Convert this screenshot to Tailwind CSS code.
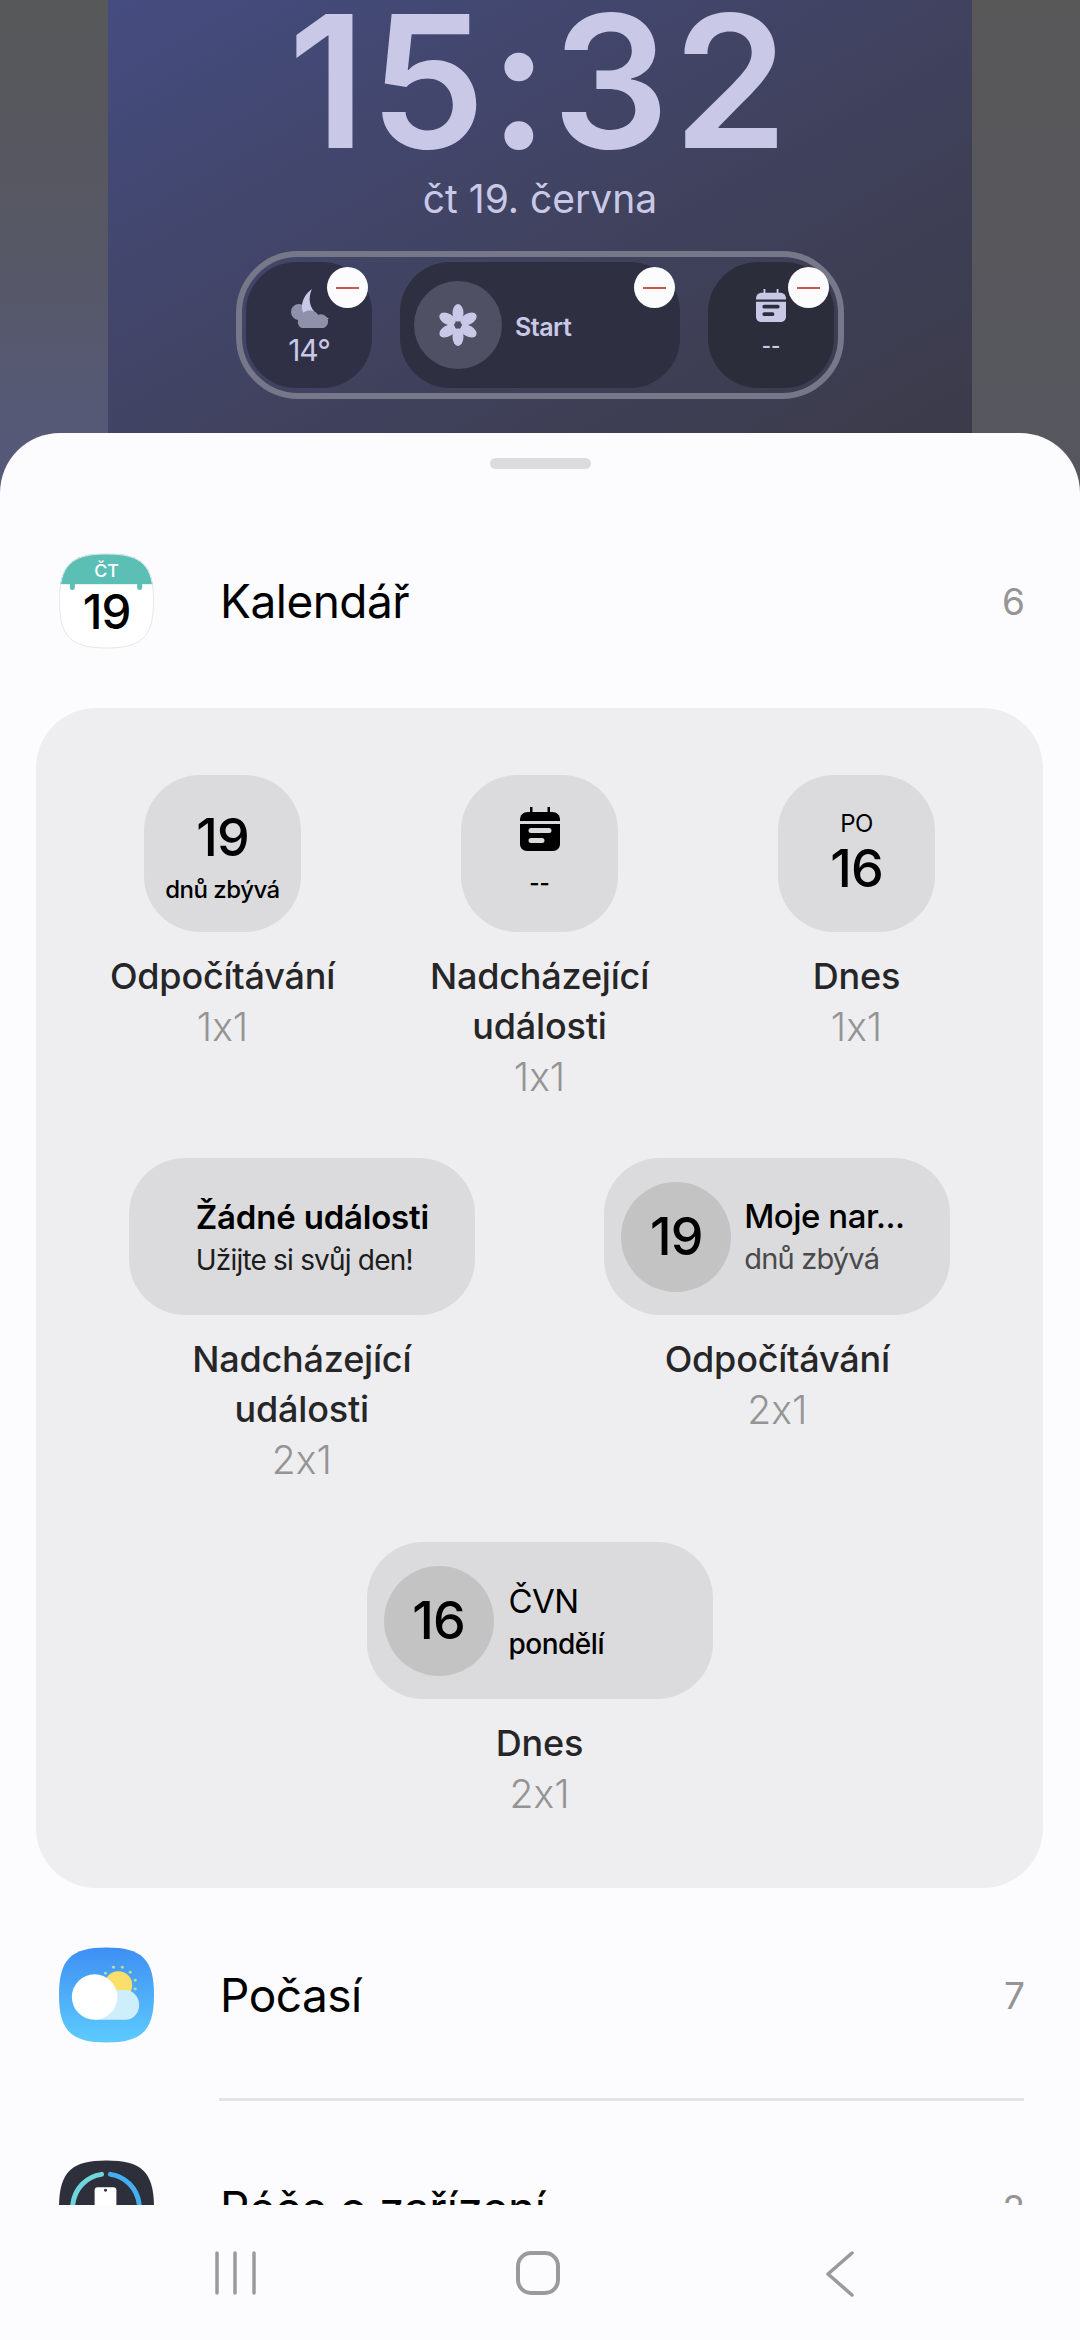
<!DOCTYPE html>
<html lang="cs">
<head>
    <meta charset="UTF-8">
    <meta name="viewport" content="width=device-width, initial-scale=1.0">
    <title>Kalendář - widgety</title>
    <script src="https://cdn.jsdelivr.net/npm/@tailwindcss/browser@4"></script>
</head>
<body class="w-[1080px] h-[2340px] overflow-hidden bg-[#fcfcff] font-['Inter','Noto_Sans',sans-serif] [font-feature-settings:'calt'_0]">

    <!-- lock screen preview -->
    <div class="flex h-[493px] -mb-[60px]">
        <div class="w-[108px] bg-gradient-to-b from-[#575858] via-[#565865] to-[#55597c]"></div>
        <div class="w-[864px] flex flex-col items-center bg-gradient-to-br from-[#454c80] via-[#40425f] to-[#3a3a46] text-[#c9c9e7]">
            <div class="h-[162px] text-[184px] leading-[162px] font-semibold tracking-[4px]">15:32</div>
            <div class="mt-[13px] h-[48px] text-[39px] leading-[48px]">čt 19. června</div>
            <div class="mt-[28px] w-[608px] h-[148px] border-[6px] border-[#767789] rounded-[62px] flex items-center justify-between px-[4px]">
                <div class="relative w-[126px] h-[126px] rounded-[50px] bg-[#2f3045] flex flex-col items-center">
                    <svg class="mt-[26px] ml-[4px]" width="42" height="42" viewBox="0 0 42 42">
                        <circle cx="9" cy="24" r="8" fill="#8f90aa"/>
                        <path d="M22 1C12 8 9 20 15 28C20 35 31 36 39 30C30 30 22 24 20 15C19 10 20 5 22 1Z" fill="#c9c9e7"/>
                        <path d="M12 40a6 6 0 0 1 -1 -11a9 8 0 0 1 17 -2a7 7 0 0 1 6 13Z" fill="#8f90aa"/>
                    </svg>
                    <div class="mt-[3px] text-[30px] leading-[34px] tracking-[-1px]">14°</div>
                    <div class="absolute top-[5px] right-[4px] w-[41px] h-[41px] rounded-full bg-[#fcfcff] flex items-center justify-center"><div class="w-[23px] h-[2px] bg-[#c8584c]"></div></div>
                </div>
                <div class="relative w-[280px] h-[126px] rounded-[50px] bg-[#2f2f42] flex items-center pl-[14px]">
                    <div class="w-[88px] h-[88px] rounded-full bg-[#4f5063] flex items-center justify-center">
                        <svg width="42" height="42" viewBox="0 0 42 42" fill="#c9c9e7">
                            <ellipse cx="21" cy="9" rx="5.500" ry="9"/>
                            <ellipse cx="21" cy="9" rx="5.500" ry="9" transform="rotate(60 21 21)"/>
                            <ellipse cx="21" cy="9" rx="5.500" ry="9" transform="rotate(120 21 21)"/>
                            <ellipse cx="21" cy="9" rx="5.500" ry="9" transform="rotate(180 21 21)"/>
                            <ellipse cx="21" cy="9" rx="5.500" ry="9" transform="rotate(240 21 21)"/>
                            <ellipse cx="21" cy="9" rx="5.500" ry="9" transform="rotate(300 21 21)"/>
                            <circle cx="21" cy="21" r="3.500" fill="#4f5063"/>
                        </svg>
                    </div>
                    <div class="ml-[13px] pt-[3px] text-[25px] leading-[30px] font-semibold tracking-[-0.5px]">Start</div>
                    <div class="absolute top-[5px] right-[5px] w-[41px] h-[41px] rounded-full bg-[#fcfcff] flex items-center justify-center"><div class="w-[23px] h-[2px] bg-[#c8584c]"></div></div>
                </div>
                <div class="relative w-[126px] h-[126px] rounded-[50px] bg-[#2c2d3a] flex flex-col items-center">
                    <svg class="mt-[27px]" width="30" height="33" viewBox="0 0 40 44" fill="currentColor">
                        <path d="M10 0h2.500v6h-2.500zM27.500 0h2.500v6h-2.500z"/>
                        <path d="M0 13C0 8 3 5 8 5h24c5 0 8 3 8 8v1H0z"/>
                        <path fill-rule="evenodd" d="M0 17h40v20c0 4 -3 7 -7 7H7c-4 0 -7 -3 -7 -7zM11 21a2.500 2.500 0 0 0 0 5h18a2.500 2.500 0 0 0 0 -5zM11 31a2.500 2.500 0 0 0 0 5h11a2.500 2.500 0 0 0 0 -5z"/>
                    </svg>
                    <div class="mt-[12px] text-[20px] leading-[24px] font-semibold">--</div>
                    <div class="absolute top-[5px] right-[5px] w-[41px] h-[41px] rounded-full bg-[#fcfcff] flex items-center justify-center"><div class="w-[23px] h-[2px] bg-[#c8584c]"></div></div>
                </div>
            </div>
        </div>
        <div class="w-[108px] bg-gradient-to-b from-[#585859] to-[#56565f]"></div>
    </div>

    <!-- bottom sheet -->
    <div class="relative h-[1772px] rounded-t-[60px] bg-[#fcfcff] overflow-hidden">
        <div class="pt-[25px] flex justify-center">
            <div class="w-[101px] h-[11px] rounded-full bg-[#dcdce0]"></div>
        </div>

        <div class="mt-[84px] flex items-center h-[96px] pl-[59px] pr-[55px]">
            <svg width="95" height="96" viewBox="0 0 96 96">
                <defs><clipPath id="sq1"><path d="M48 0C84 0 96 12 96 48C96 84 84 96 48 96C12 96 0 84 0 48C0 12 12 0 48 0Z"/></clipPath></defs>
                <g clip-path="url(#sq1)">
                    <rect width="96" height="96" fill="#fff"/>
                    <rect width="96" height="31" fill="#5cbfb6"/>
                    <rect x="11" y="28" width="5" height="9" rx="2.500" fill="#5cbfb6"/>
                    <rect x="79" y="28" width="5" height="9" rx="2.500" fill="#5cbfb6"/>
                    <text x="48" y="24" text-anchor="middle" font-family="Inter" font-size="18" font-weight="500" fill="#fff">ČT</text>
                    <text x="48" y="76" text-anchor="middle" font-family="Inter" font-size="48" font-weight="500" letter-spacing="-1" fill="#000">19</text>
                </g>
                <path d="M48 .5C84 .5 95.500 12 95.500 48C95.500 84 84 95.500 48 95.500C12 95.500 .5 84 .5 48C.5 12 12 .5 48 .5Z" fill="none" stroke="#e6e6e8"/>
            </svg>
            <div class="ml-[66px] text-[46px] leading-[56px] text-black tracking-[-0.5px]">Kalendář</div>
            <div class="ml-auto pt-[2px] text-[37px] leading-[44px] text-[#959595]">6</div>
        </div>

        <div class="mt-[59px] ml-[36px] w-[1007px] h-[1180px] rounded-[60px] bg-[#eeeef0] px-[28px] pt-[67px] text-center">
            <div class="grid grid-cols-3">
                <div class="flex flex-col items-center">
                    <div class="w-[157px] h-[157px] rounded-[56px] bg-[#dbdbdd] flex flex-col items-center text-black">
                        <div class="mt-[31px] text-[52px] leading-[64px] font-medium tracking-[-1px]">19</div>
                        <div class="mt-[5px] text-[24px] leading-[30px] font-medium tracking-[-0.5px]">dnů zbývá</div>
                    </div>
                    <div class="mt-[19px] w-[280px] text-[36px] leading-[50px] font-medium tracking-[-0.2px] text-[#262628]">Odpočítávání</div>
                    <div class="mt-[1px] text-[39px] leading-[50px] font-light text-[#949494]">1x1</div>
                </div>
                <div class="flex flex-col items-center">
                    <div class="w-[157px] h-[157px] rounded-[56px] bg-[#dbdbdd] flex flex-col items-center text-black">
                        <svg class="mt-[32px]" width="40" height="44" viewBox="0 0 40 44" fill="currentColor">
                            <path d="M10 0h2.500v6h-2.500zM27.500 0h2.500v6h-2.500z"/>
                            <path d="M0 13C0 8 3 5 8 5h24c5 0 8 3 8 8v1H0z"/>
                            <path fill-rule="evenodd" d="M0 17h40v20c0 4 -3 7 -7 7H7c-4 0 -7 -3 -7 -7zM11 21a2.500 2.500 0 0 0 0 5h18a2.500 2.500 0 0 0 0 -5zM11 31a2.500 2.500 0 0 0 0 5h11a2.500 2.500 0 0 0 0 -5z"/>
                        </svg>
                        <div class="mt-[17px] text-[22px] leading-[30px] font-semibold">--</div>
                    </div>
                    <div class="mt-[19px] w-[280px] text-[36px] leading-[50px] font-medium tracking-[-0.2px] text-[#262628]">Nadcházející události</div>
                    <div class="mt-[1px] text-[39px] leading-[50px] font-light text-[#949494]">1x1</div>
                </div>
                <div class="flex flex-col items-center">
                    <div class="w-[157px] h-[157px] rounded-[56px] bg-[#dbdbdd] flex flex-col items-center text-black">
                        <div class="mt-[34px] text-[24px] leading-[30px] tracking-[-0.5px]">PO</div>
                        <div class="-mt-[2px] text-[52px] leading-[64px] font-medium tracking-[-1px]">16</div>
                    </div>
                    <div class="mt-[19px] w-[280px] text-[36px] leading-[50px] font-medium tracking-[-0.2px] text-[#262628]">Dnes</div>
                    <div class="mt-[1px] text-[39px] leading-[50px] font-light text-[#949494]">1x1</div>
                </div>
            </div>

            <div class="mt-[56px] grid grid-cols-2">
                <div class="flex flex-col items-center">
                    <div class="w-[346px] h-[157px] rounded-[56px] bg-[#dbdbdd] flex flex-col justify-center items-start pl-[67px] pt-[3px] text-left text-black">
                        <div class="text-[33px] leading-[44px] font-semibold tracking-[-0.2px]">Žádné události</div>
                        <div class="text-[28px] leading-[42px] tracking-[-0.8px] text-[#1c1c1c]">Užijte si svůj den!</div>
                    </div>
                    <div class="mt-[19px] w-[280px] text-[36px] leading-[50px] font-medium tracking-[-0.2px] text-[#262628]">Nadcházející události</div>
                    <div class="mt-[1px] text-[39px] leading-[50px] font-light text-[#949494]">2x1</div>
                </div>
                <div class="flex flex-col items-center">
                    <div class="w-[346px] h-[157px] rounded-[56px] bg-[#dbdbdd] flex items-center pl-[17px] text-left">
                        <div class="w-[110px] h-[110px] rounded-full bg-[#c3c3c3] flex items-center justify-center text-[52px] font-medium tracking-[-1px] text-black">19</div>
                        <div class="ml-[13px] pt-[1px]">
                            <div class="text-[33px] leading-[44px] font-medium tracking-[-0.5px] text-black">Moje nar...</div>
                            <div class="text-[29px] leading-[42px] tracking-[-0.8px] text-[#4a4a4a]">dnů zbývá</div>
                        </div>
                    </div>
                    <div class="mt-[19px] w-[280px] text-[36px] leading-[50px] font-medium tracking-[-0.2px] text-[#262628]">Odpočítávání</div>
                    <div class="mt-[1px] text-[39px] leading-[50px] font-light text-[#949494]">2x1</div>
                </div>
            </div>

            <div class="mt-[57px] flex flex-col items-center">
                <div class="w-[346px] h-[157px] rounded-[56px] bg-[#dbdbdd] flex items-center pl-[17px] text-left text-black">
                    <div class="w-[110px] h-[110px] rounded-full bg-[#c3c3c3] flex items-center justify-center text-[52px] font-medium tracking-[-1px]">16</div>
                    <div class="ml-[15px] pt-[3px]">
                        <div class="text-[33px] leading-[44px] tracking-[-0.5px]">ČVN</div>
                        <div class="text-[28px] leading-[42px] font-medium tracking-[-0.5px]">pondělí</div>
                    </div>
                </div>
                <div class="mt-[19px] w-[280px] text-[36px] leading-[50px] font-medium tracking-[-0.2px] text-[#262628]">Dnes</div>
                <div class="mt-[1px] text-[39px] leading-[50px] font-light text-[#949494]">2x1</div>
            </div>
        </div>

        <div class="mt-[59px] flex items-center h-[96px] pl-[59px] pr-[55px]">
            <svg width="95" height="96" viewBox="0 0 96 96">
                <defs>
                    <linearGradient id="sky" x1="0" y1="0" x2="0" y2="1"><stop offset="0" stop-color="#3e8ff3"/><stop offset="1" stop-color="#5dcbfe"/></linearGradient>
                </defs>
                <path d="M48 0C84 0 96 12 96 48C96 84 84 96 48 96C12 96 0 84 0 48C0 12 12 0 48 0Z" fill="url(#sky)"/>
                <circle cx="60" cy="38" r="14" fill="#fbdf6b"/>
                <g fill="#b9dc9a"><circle cx="47" cy="26" r="1.500"/><circle cx="55" cy="20" r="1.500"/><circle cx="64" cy="20" r="1.500"/><circle cx="72" cy="25" r="1.500"/><circle cx="77" cy="33" r="1.500"/><circle cx="77" cy="42" r="1.500"/></g>
                <path d="M36 73V43H67A14 15 0 0 1 67 73Z" fill="#cfeefc"/>
                <circle cx="36" cy="50" r="23" fill="#fff"/>
            </svg>
            <div class="ml-[66px] text-[46px] leading-[56px] text-black tracking-[-0.5px]">Počasí</div>
            <div class="ml-auto pt-[2px] text-[37px] leading-[44px] text-[#959595]">7</div>
        </div>

        <div class="mt-[55px] ml-[219px] w-[805px] h-[3px] bg-[#e4e4e6]"></div>

        <div class="mt-[59px] flex items-center h-[96px] pl-[59px] pr-[55px]">
            <svg width="95" height="96" viewBox="0 0 96 96">
                <path d="M48 0C84 0 96 12 96 48C96 84 84 96 48 96C12 96 0 84 0 48C0 12 12 0 48 0Z" fill="#2d2f3b"/>
                <path d="M14 44C16 28 28 16 43 14" fill="none" stroke="#6fd6dc" stroke-width="5" stroke-linecap="round"/>
                <path d="M52 14C67 16 79 28 81 44" fill="none" stroke="#45aef0" stroke-width="5" stroke-linecap="round"/>
                <rect x="36" y="27" width="22" height="50" rx="3" fill="#fff"/>
                <circle cx="47" cy="30" r="1.500" fill="#2d2f3b"/>
            </svg>
            <div class="ml-[66px] text-[46px] leading-[56px] text-black tracking-[-0.5px]">Péče o zařízení</div>
            <div class="ml-auto pt-[2px] text-[37px] leading-[44px] text-[#959595]">2</div>
        </div>
    </div>

    <!-- navigation bar -->
    <div class="h-[135px] pl-[85px] pt-[46px] flex bg-[#fcfcff]">
        <div class="w-[302px] flex justify-center">
            <svg width="44" height="44" viewBox="0 0 44 44" stroke="#9a9a9a" stroke-width="3.500" stroke-linecap="round"><path d="M3 2V42M21 2V42M40 2V42"/></svg>
        </div>
        <div class="w-[302px] flex justify-center">
            <div class="w-[44px] h-[44px] rounded-[15px] border-[4px] border-[#9a9a9a]"></div>
        </div>
        <div class="w-[302px] flex justify-center">
            <svg width="30" height="46" viewBox="0 0 30 46" fill="none" stroke="#9a9a9a" stroke-width="3.500" stroke-linecap="round" stroke-linejoin="round"><path d="M27 2L3 23L27 44" /></svg>
        </div>
    </div>
</body>
</html>
